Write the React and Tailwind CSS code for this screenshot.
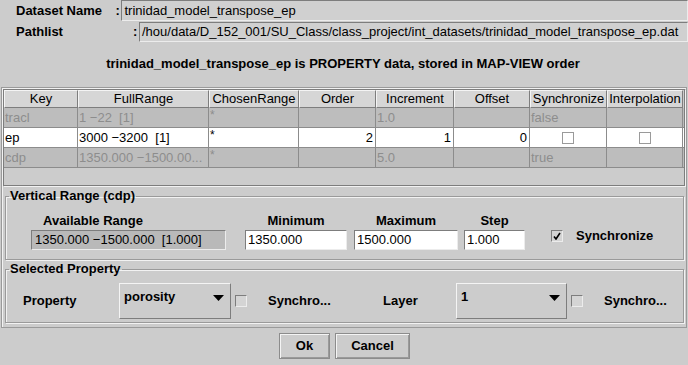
const cols = [
  { name: 'Key', w: 'w-[74px]' },
  { name: 'FullRange', w: 'w-[131px]' },
  { name: 'ChosenRange', w: 'w-[90px]' },
  { name: 'Order', w: 'w-[77px]' },
  { name: 'Increment', w: 'w-[78px]' },
  { name: 'Offset', w: 'w-[76px]' },
  { name: 'Synchronize', w: 'w-[77px]' },
  { name: 'Interpolation', w: 'w-[76px]' },
];

const rows = [
  { cells: ['tracl', '1 \u221222  [1]', '*', '', '1.0', '', 'false', ''], enabled: false },
  { cells: ['ep', '3000 \u22123200  [1]', '*', '2', '1', '0', 'box', 'box'], enabled: true },
  { cells: ['cdp', '1350.000 \u22121500.00...', '*', '', '5.0', '', 'true', ''], enabled: false },
];

const sunken = 'border border-t-[#7d7d7d] border-l-[#7d7d7d] border-b-[#ececec] border-r-[#ececec]';
const raised = 'border border-t-[#f4f4f4] border-l-[#f4f4f4] border-b-[#7d7d7d] border-r-[#7d7d7d]';

const SmallBox = ({ white }) => (
  <div className={`w-[12px] h-[12px] ${sunken} ${white ? 'bg-white' : 'bg-[#d4d4d4]'}`} />
);

const Combo = ({ value, w }) => (
  <div className={`${w} h-[36px] ${raised} flex items-start justify-between pl-[4px] pr-[6px] pt-[5px]`}>
    <span className="font-bold leading-[16px]">{value}</span>
    <svg width="11" height="6" viewBox="0 0 11 6" className="mt-[6px]">
      <polygon points="0,0 11,0 5.5,6" fill="#000" />
    </svg>
  </div>
);

const Group = ({ title, className, children }) => (
  <fieldset className={`ml-[3px] w-[679px] border border-[#9a9a9a] shadow-[1px_1px_0_#f2f2f2,inset_1px_1px_0_#f2f2f2] ${className}`}>
    <legend className="ml-[3px] px-[1px] font-bold leading-[14px]">{title}</legend>
    {children}
  </fieldset>
);

export default function App() {
  return (
    <div className="w-[688px] h-[365px] overflow-hidden bg-[#cccccc] text-[13px] text-black font-['Liberation_Sans',Arial,sans-serif]">
      {/* header fields */}
      <div className="flex h-[21px] items-center">
        <span className="pl-[16px] w-[118px] font-bold">Dataset Name</span>
        <span className="w-[6px] font-bold">:</span>
        <div className={`w-[580px] h-[21px] ${sunken} bg-[#d0d0d0] pl-[2px] leading-[19px] whitespace-nowrap`}>trinidad_model_transpose_ep</div>
      </div>
      <div className="flex h-[20px] items-center mt-[1px]">
        <span className="pl-[16px] w-[133px] font-bold">Pathlist</span>
        <span className="w-[6px] font-bold">:</span>
        <div className={`w-[549px] h-[20px] ${sunken} bg-[#d0d0d0] pl-[2px] leading-[18px] whitespace-nowrap overflow-hidden`}>/hou/data/D_152_001/SU_Class/class_project/int_datasets/trinidad_model_transpose_ep.dat</div>
      </div>
      <div className="mt-[13px] h-[18px] leading-[18px] text-center font-bold text-[13px] pr-[2px]">
        trinidad_model_transpose_ep is PROPERTY data, stored in MAP-VIEW order
      </div>

      {/* main frame */}
      <div className="mt-[14px] ml-[1px] w-[686px] h-[241px] border border-[#9a9a9a] shadow-[inset_1px_1px_0_#f2f2f2]">
        {/* table */}
        <div className="mt-[1px] ml-[1px] w-[682px] h-[97px] border border-[#7d7d7d] shadow-[1px_1px_0_#f2f2f2] bg-[#cccccc] overflow-hidden">
          <div className="flex h-[18px]">
            {cols.map((c) => (
              <div key={c.name} className={`${c.w} h-[18px] ${raised} bg-[#d6d6d6] text-center leading-[16px] whitespace-nowrap overflow-hidden`}>
                {c.name}
              </div>
            ))}
          </div>
          {rows.map((r, i) => (
            <div key={i} className={`flex h-[20px] border-b border-[#8c8c8c] ${r.enabled ? 'bg-white text-black' : 'bg-[#bdbdbd] text-[#8d8d8d]'}`}>
              {r.cells.map((v, j) => {
                const numeric = r.enabled && j >= 3 && j <= 5;
                return (
                  <div
                    key={j}
                    className={`${cols[j].w} h-[19px] border-r border-[#8c8c8c] leading-[19px] whitespace-pre overflow-hidden px-[1px] flex items-center ${numeric ? 'justify-end pr-[2px]' : v === 'box' ? 'justify-center' : 'justify-start'}`}
                  >
                    {v === 'box' ? <div className="w-[12px] h-[12px] border border-[#9a9a9a] bg-white" /> : v === '*' ? <span className="self-start leading-[14px] text-[12px]">*</span> : v}
                  </div>
                );
              })}
            </div>
          ))}
        </div>

        {/* vertical range */}
        <Group title="Vertical Range (cdp)" className="mt-[3px] h-[71px]">
          <div className="flex items-start pt-[11px]">
            <div className="ml-[25px] w-[195px] flex flex-col">
              <span className="pl-[12px] h-[14px] leading-[14px] font-bold">Available Range</span>
              <div className={`mt-[2px] h-[20px] ${sunken} bg-[#b9b9b9] pl-[3px] leading-[18px] whitespace-pre`}>{'1350.000 \u22121500.000  [1.000]'}</div>
            </div>
            <div className="ml-[19px] w-[102px] flex flex-col">
              <span className="text-center h-[14px] leading-[14px] font-bold">Minimum</span>
              <div className={`mt-[2px] h-[20px] ${sunken} bg-white pl-[2px] leading-[18px]`}>1350.000</div>
            </div>
            <div className="ml-[7px] w-[104px] flex flex-col">
              <span className="text-center h-[14px] leading-[14px] font-bold">Maximum</span>
              <div className={`mt-[2px] h-[20px] ${sunken} bg-white pl-[2px] leading-[18px]`}>1500.000</div>
            </div>
            <div className="ml-[6px] w-[61px] flex flex-col">
              <span className="text-center h-[14px] leading-[14px] font-bold">Step</span>
              <div className={`mt-[2px] h-[20px] ${sunken} bg-white pl-[2px] leading-[18px]`}>1.000</div>
            </div>
            <div className="ml-[26px] mt-[12px] flex items-center">
              <div className={`w-[12px] h-[12px] ${sunken} bg-[#d4d4d4] flex items-center justify-center`}>
                <svg width="8" height="8" viewBox="0 0 8 8">
                  <path d="M1 4.5 L3 7 L7 1" stroke="#000" strokeWidth="1.6" fill="none" />
                </svg>
              </div>
              <span className="ml-[13px] font-bold">Synchronize</span>
            </div>
          </div>
        </Group>

        {/* selected property */}
        <Group title="Selected Property" className="mt-[2px] h-[61px]">
          <div className="flex items-center pt-[7px]">
            <span className="ml-[17px] w-[96px] font-bold">Property</span>
            <Combo value="porosity" w="w-[112px]" />
            <div className="ml-[4px]"><SmallBox /></div>
            <span className="ml-[21px] w-[115px] font-bold">Synchro...</span>
            <span className="w-[73px] font-bold">Layer</span>
            <Combo value="1" w="w-[111px]" />
            <div className="ml-[4px]"><SmallBox /></div>
            <span className="ml-[21px] font-bold">Synchro...</span>
          </div>
        </Group>
      </div>

      {/* buttons */}
      <div className="mt-[5px] flex justify-center gap-[5px] pl-[1px]">
        <button className="w-[51px] h-[26px] border border-[#8c8c8c] shadow-[inset_1px_1px_0_#f4f4f4,inset_-1px_-1px_0_#9a9a9a] bg-[#cccccc] font-bold">Ok</button>
        <button className="w-[75px] h-[26px] border border-[#8c8c8c] shadow-[inset_1px_1px_0_#f4f4f4,inset_-1px_-1px_0_#9a9a9a] bg-[#cccccc] font-bold">Cancel</button>
      </div>
    </div>
  );
}
